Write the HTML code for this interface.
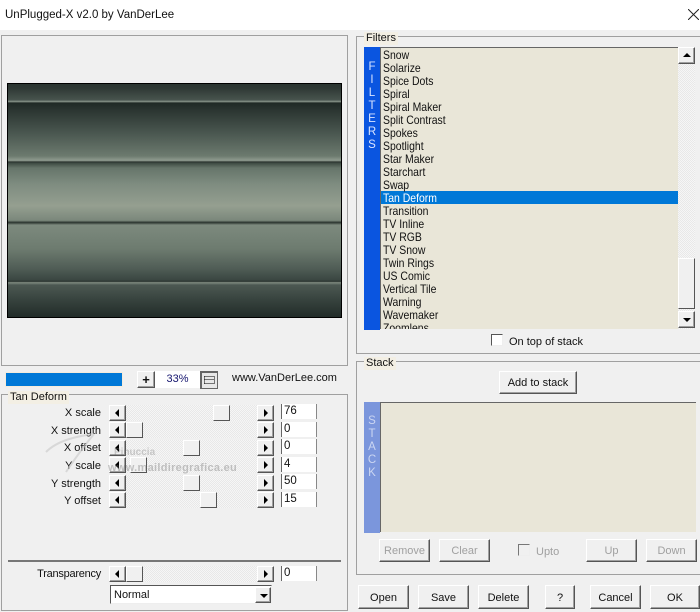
<!DOCTYPE html>
<html><head><meta charset="utf-8"><style>
html,body{margin:0;padding:0}
body{width:700px;height:612px;overflow:hidden;background:#f0f0f0;position:relative;font-family:"Liberation Sans",sans-serif;font-size:11px;color:#111}
div,span{position:absolute;box-sizing:border-box;white-space:nowrap}
.g{border:1px solid #a0a0a0}
.lb{background:#f0f0f0;padding:0 2px;height:13px;line-height:13px}
.b{background:#f0f0f0;border:1px solid;border-color:#fff #555 #555 #fff;box-shadow:inset -1px -1px 0 #a0a0a0;text-align:center;line-height:20px;padding-top:1px}
.d{color:#a0a0a0}
.tr{height:16px;left:125px;width:132px;background:repeating-conic-gradient(#e8e8e8 0 25%,#f6f6f6 0 50%) 0 0/2px 2px}
.ar{width:17px;height:16px;background:#f0f0f0;border:1px solid;border-color:#fff #555 #555 #fff;box-shadow:inset -1px -1px 0 #a0a0a0}
.al:after,.arr:after,.au:after,.ad:after{content:"";position:absolute;width:0;height:0}
.al:after{left:5px;top:3px;border:4px solid transparent;border-left:0;border-right:4px solid #000}
.arr:after{left:6px;top:3px;border:4px solid transparent;border-right:0;border-left:4px solid #000}
.au:after{left:4px;top:5px;border:4px solid transparent;border-top:0;border-bottom:4px solid #000}
.ad:after{left:4px;top:6px;border:4px solid transparent;border-bottom:0;border-top:4px solid #000}
.th{width:17px;height:16px;background:#f0f0f0;border:1px solid;border-color:#fff #555 #555 #fff}
.lbl{right:599px;text-align:right;height:16px;line-height:16px}
.ed{left:281px;width:36px;height:15px;background:#fff;line-height:15px;padding-left:2px;font-size:11.5px;border-left:1px solid #666;border-right:1px solid #888}
.it{left:383px;height:13px;line-height:13px;font-size:12px;transform:scaleX(.87);transform-origin:left center}
.vt{text-align:center;width:16px;line-height:13px;white-space:normal;font-size:11.5px}
</style></head><body>
<div style="left:0;top:0;width:700px;height:30px;background:#fff"></div>
<div style="left:5px;top:8px;font-size:11.5px;height:15px;line-height:15px">UnPlugged-X v2.0 by VanDerLee</div>
<svg style="position:absolute;left:688px;top:9px" width="11" height="11"><path d="M0 0L11 11M11 0L0 11" stroke="#222" stroke-width="1"/></svg>

<div class="g" style="left:1px;top:35px;width:347px;height:331px"></div>
<div style="left:7px;top:83px;width:335px;height:235px;border:1px solid #000;background:linear-gradient(to bottom,#2a3430 0,#2e3834 4px,#48544e 16px,#8a968c 17.5px,#1f2925 19px,#2b3531 26px,#4b5851 50px,#6c7a6e 72px,#909c90 76.5px,#2a332e 78px,#3d4a42 79px,#66756a 84px,#7e8c80 100px,#959f90 122px,#7a877b 136.5px,#2a332e 138.5px,#7d8a7e 141px,#6d7b6f 165px,#4f5c55 185px,#3a4641 196px,#2a3430 197.5px,#808c80 198.5px,#4c5852 201px,#38443f 215px,#222c29 233px)"></div>

<div style="left:5px;top:372px;width:118px;height:15px;background:#0078d7;border:1px solid #f5ecdc"></div>
<div class="b" style="left:137px;top:371px;width:18px;height:17px;line-height:13px;font-weight:bold;font-size:13px">+</div>
<div style="left:155px;top:371px;width:45px;height:17px;background:#fff;color:#14146e;text-align:center;line-height:16px;font-size:11px">33%</div>
<svg style="position:absolute;left:200px;top:371px" width="18" height="18"><rect x="0.5" y="0.5" width="17" height="17" fill="#e8e8e8" stroke="#666"/><rect x="1" y="1" width="16" height="1" fill="#666"/><rect x="1" y="1" width="1" height="16" fill="#666"/><path d="M4.5 5.5H14.5M4.5 8.5H14.5M4.5 12.5H14.5M4.5 5.5V12.5M14.5 5.5V12.5" stroke="#000" stroke-dasharray="1 1" fill="none"/></svg>
<div style="left:232px;top:371px;height:15px;line-height:15px;font-size:11px">www.VanDerLee.com</div>

<div class="g" style="left:1px;top:394px;width:347px;height:217px"></div>
<div class="lb" style="left:8px;top:391px;background:#f3efe4">Tan Deform</div>

<div class="tr" style="top:405px"></div><div class="ar al" style="left:109px;top:405px"></div><div class="ar arr" style="left:257px;top:405px"></div><div class="th" style="left:213px;top:405px"></div>
<div class="tr" style="top:422px"></div><div class="ar al" style="left:109px;top:422px"></div><div class="ar arr" style="left:257px;top:422px"></div><div class="th" style="left:126px;top:422px"></div>
<div class="tr" style="top:440px"></div><div class="ar al" style="left:109px;top:440px"></div><div class="ar arr" style="left:257px;top:440px"></div><div class="th" style="left:183px;top:440px"></div>
<div class="tr" style="top:457px"></div><div class="ar al" style="left:109px;top:457px"></div><div class="ar arr" style="left:257px;top:457px"></div><div class="th" style="left:130px;top:457px"></div>
<div class="tr" style="top:475px"></div><div class="ar al" style="left:109px;top:475px"></div><div class="ar arr" style="left:257px;top:475px"></div><div class="th" style="left:183px;top:475px"></div>
<div class="tr" style="top:492px"></div><div class="ar al" style="left:109px;top:492px"></div><div class="ar arr" style="left:257px;top:492px"></div><div class="th" style="left:200px;top:492px"></div>
<div class="tr" style="top:566px"></div><div class="ar al" style="left:109px;top:566px"></div><div class="ar arr" style="left:257px;top:566px"></div><div class="th" style="left:126px;top:566px"></div>

<div class="lbl" style="top:405px">X scale</div>
<div class="lbl" style="top:423px">X strength</div>
<div class="lbl" style="top:440px">X offset</div>
<div class="lbl" style="top:458px">Y scale</div>
<div class="lbl" style="top:476px">Y strength</div>
<div class="lbl" style="top:493px">Y offset</div>
<div class="lbl" style="top:566px;letter-spacing:-.25px">Transparency</div>

<svg style="position:absolute;left:44px;top:432px" width="60" height="42"><path d="M2 20C14 8 34 4 50 2M50 2C40 14 30 28 22 40" stroke="#c8c8c8" stroke-width="2" fill="none" opacity=".6"/></svg>
<div style="left:114px;top:447px;font-size:10px;font-weight:bold;color:rgba(120,120,120,.35);height:12px;line-height:12px">Pinuccia</div>
<div style="left:108px;top:462px;font-size:11px;font-weight:bold;letter-spacing:.3px;color:rgba(110,110,110,.38);height:13px;line-height:13px">www.maildiregrafica.eu</div>

<div class="ed" style="top:404px">76</div>
<div class="ed" style="top:422px">0</div>
<div class="ed" style="top:439px">0</div>
<div class="ed" style="top:457px">4</div>
<div class="ed" style="top:474px">50</div>
<div class="ed" style="top:492px">15</div>
<div class="ed" style="top:566px">0</div>

<div style="left:8px;top:560px;width:333px;height:2px;background:#777"></div>
<div style="left:110px;top:585px;width:162px;height:19px;background:#fff;border:1px solid;border-color:#555 #eee #eee #555;line-height:19px;padding-left:3px">Normal</div>
<div class="ar ad" style="left:255px;top:587px;width:16px;height:16px"></div>

<div class="g" style="left:356px;top:36px;width:346px;height:318px"></div>
<div class="lb" style="left:364px;top:32px;background:#f3efe4">Filters</div>
<div style="left:364px;top:47px;width:16px;height:283px;background:#0a55e0"></div>
<div class="vt" style="left:364px;top:61px;color:#d8e4ff">F<br>I<br>L<br>T<br>E<br>R<br>S</div>
<div style="left:380px;top:47px;width:298px;height:282px;background:#e9e6d8;border-top:1px solid #666;border-left:1px solid #666;overflow:hidden"></div>
<div style="left:381px;top:191px;width:297px;height:13px;background:#0078d7"></div>
<div class="it" style="top:49px">Snow</div>
<div class="it" style="top:62px">Solarize</div>
<div class="it" style="top:75px">Spice Dots</div>
<div class="it" style="top:88px">Spiral</div>
<div class="it" style="top:101px">Spiral Maker</div>
<div class="it" style="top:114px">Split Contrast</div>
<div class="it" style="top:127px">Spokes</div>
<div class="it" style="top:140px">Spotlight</div>
<div class="it" style="top:153px">Star Maker</div>
<div class="it" style="top:166px">Starchart</div>
<div class="it" style="top:179px">Swap</div>
<div class="it" style="top:192px;color:#fff">Tan Deform</div>
<div class="it" style="top:205px">Transition</div>
<div class="it" style="top:218px">TV Inline</div>
<div class="it" style="top:231px">TV RGB</div>
<div class="it" style="top:244px">TV Snow</div>
<div class="it" style="top:257px">Twin Rings</div>
<div class="it" style="top:270px">US Comic</div>
<div class="it" style="top:283px">Vertical Tile</div>
<div class="it" style="top:296px">Warning</div>
<div class="it" style="top:309px">Wavemaker</div>
<div style="left:381px;top:322px;width:297px;height:7px;overflow:hidden"><span class="it" style="left:2px;top:0">Zoomlens</span></div>
<div style="left:678px;top:47px;width:17px;height:282px;background:repeating-conic-gradient(#e8e8e8 0 25%,#f6f6f6 0 50%) 0 0/2px 2px"></div>
<div class="ar au" style="left:678px;top:47px;height:17px"></div>
<div class="th" style="left:678px;top:258px;height:51px"></div>
<div class="ar ad" style="left:678px;top:311px;height:17px"></div>
<div style="left:491px;top:334px;width:12px;height:12px;background:#fff;border:1px solid;border-color:#555 #eee #eee #555"></div>
<div style="left:509px;top:335px;height:14px;line-height:14px">On top of stack</div>

<div class="g" style="left:356px;top:361px;width:346px;height:214px"></div>
<div class="lb" style="left:364px;top:357px;background:#f3efe4">Stack</div>
<div class="b" style="left:499px;top:371px;width:78px;height:23px">Add to stack</div>
<div style="left:364px;top:402px;width:16px;height:131px;background:#7b96dc"></div>
<div class="vt" style="left:364px;top:415px;color:#cbd6f2">S<br>T<br>A<br>C<br>K</div>
<div style="left:380px;top:402px;width:316px;height:130px;background:#e9e6d8;border-top:1px solid #666;border-left:1px solid #666"></div>

<div class="b d" style="left:379px;top:539px;width:51px;height:23px">Remove</div>
<div class="b d" style="left:439px;top:539px;width:51px;height:23px">Clear</div>
<div style="left:518px;top:544px;width:12px;height:12px;background:#f0f0f0;border:1px solid;border-color:#777 #eee #eee #777"></div>
<div class="d" style="left:536px;top:545px;height:14px;line-height:14px">Upto</div>
<div class="b d" style="left:586px;top:539px;width:51px;height:23px">Up</div>
<div class="b d" style="left:646px;top:539px;width:51px;height:23px">Down</div>

<div class="b" style="left:358px;top:585px;width:51px;height:24px;line-height:22px">Open</div>
<div class="b" style="left:418px;top:585px;width:51px;height:24px;line-height:22px">Save</div>
<div class="b" style="left:478px;top:585px;width:51px;height:24px;line-height:22px">Delete</div>
<div class="b" style="left:545px;top:585px;width:30px;height:24px;line-height:22px">?</div>
<div class="b" style="left:590px;top:585px;width:51px;height:24px;line-height:22px">Cancel</div>
<div class="b" style="left:650px;top:585px;width:50px;height:24px;line-height:22px">OK</div>
</body></html>
